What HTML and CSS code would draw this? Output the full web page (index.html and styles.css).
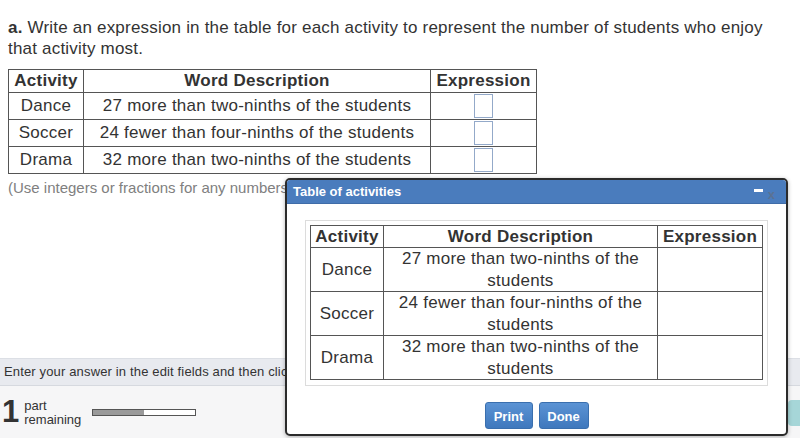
FILE: index.html
```html
<!DOCTYPE html>
<html>
<head>
<meta charset="utf-8">
<link rel="stylesheet" href="styles.css">
</head>
<body>
<div class="page">
  <div class="content">
    <p class="prompt"><b>a.</b> Write an expression in the table for each activity to represent the number of students who enjoy that activity most.</p>
    <table class="main-table">
      <tr class="head"><th class="c1">Activity</th><th class="c2">Word Description</th><th class="c3">Expression</th></tr>
      <tr><td>Dance</td><td>27 more than two-ninths of the students</td><td><span class="field"></span></td></tr>
      <tr><td>Soccer</td><td>24 fewer than four-ninths of the students</td><td><span class="field"></span></td></tr>
      <tr><td>Drama</td><td>32 more than two-ninths of the students</td><td><span class="field"></span></td></tr>
    </table>
    <p class="note">(Use integers or fractions for any numbers in the expressions.)</p>
  </div>
  <div class="spacer"></div>
  <div class="hint-bar">Enter your answer in the edit fields and then click Check Answer.</div>
  <div class="footer">
    <div class="count">1</div>
    <div class="count-label">part<br>remaining</div>
    <div class="progress"><div class="progress-fill"></div></div>
    <div class="check-btn"></div>
  </div>

  <div class="dialog">
    <div class="dialog-title">
      <span class="dialog-name">Table of activities</span>
      <span class="dialog-ctrls"><span class="minus"></span><span class="close">x</span></span>
    </div>
    <div class="dialog-body">
      <div class="frame">
        <table class="pop-table">
          <tr class="head"><th class="p1">Activity</th><th class="p2">Word Description</th><th class="p3">Expression</th></tr>
          <tr><td>Dance</td><td>27 more than two-ninths of the students</td><td></td></tr>
          <tr><td>Soccer</td><td>24 fewer than four-ninths of the students</td><td></td></tr>
          <tr><td>Drama</td><td>32 more than two-ninths of the students</td><td></td></tr>
        </table>
      </div>
      <div class="buttons">
        <span class="btn btn-print">Print</span>
        <span class="btn btn-done">Done</span>
      </div>
    </div>
  </div>
</div>
</body>
</html>
```

FILE: styles.css
```css
html, body {
  margin: 0;
  padding: 0;
  background: #fff;
}
body {
  font-family: "Liberation Sans", Arial, sans-serif;
  color: #333;
  width: 800px;
  height: 438px;
  overflow: hidden;
}
.page {
  position: relative;
  width: 800px;
  height: 438px;
  display: flex;
  flex-direction: column;
}
.content {
  padding: 17px 8px 0 8px;
}
.prompt {
  margin: 0;
  font-size: 17px;
  letter-spacing: 0.2px;
  line-height: 21px;
  width: 784px;
}
.prompt b {
  font-weight: bold;
}
.main-table {
  margin-top: 10px;
  border-collapse: collapse;
  font-size: 17px;
  letter-spacing: 0.25px;
  color: #333;
}
.main-table th, .main-table td {
  border: 1px solid #555;
  padding: 0;
  text-align: center;
  white-space: nowrap;
}
.main-table th {
  height: 22px;
  font-weight: bold;
  line-height: 20px;
}
.main-table td {
  height: 26px;
}
.main-table .c1 { width: 74px; }
.main-table .c2 { width: 346px; }
.main-table .c3 { width: 105px; }
.field {
  display: inline-block;
  width: 17px;
  height: 22px;
  border: 1px solid #93a9c9;
  vertical-align: middle;
  background: #fff;
}
.note {
  margin: 5px 0 0 0;
  font-size: 15px;
  line-height: 18px;
  color: #808080;
  white-space: nowrap;
}
.spacer {
  flex: 1;
}
.hint-bar {
  height: 26px;
  background: #e8eaef;
  border-top: 1px solid #dcdfe5;
  border-bottom: 1px solid #d6d9df;
  font-size: 13px;
  letter-spacing: 0.15px;
  line-height: 26px;
  padding-left: 4px;
  white-space: nowrap;
  overflow: hidden;
  color: #333;
}
.footer {
  height: 52px;
  background: #f6f6f7;
  display: flex;
  align-items: center;
  position: relative;
}
.count {
  font-size: 31px;
  font-weight: bold;
  line-height: 32px;
  margin-left: 2px;
  color: #333;
}
.count-label {
  font-size: 13px;
  line-height: 14px;
  margin-left: 5px;
  margin-top: 2px;
  color: #333;
}
.progress {
  margin-left: 11px;
  width: 102px;
  height: 5px;
  border: 1px solid #555;
  background: #fff;
  margin-top: 1px;
}
.progress-fill {
  width: 51px;
  height: 5px;
  background: #9a9a9a;
}
.check-btn {
  margin-left: auto;
  width: 12px;
  height: 26px;
  background: #a6d6d8;
  border-radius: 4px 0 0 4px;
  margin-top: 1px;
}

/* Dialog overlay */
.dialog {
  position: absolute;
  left: 285px;
  top: 178px;
  width: 499px;
  height: 254px;
  border: 2px solid #2b2b2b;
  border-radius: 5px;
  background: #fff;
  overflow: hidden;
  box-shadow: 0 1px 4px rgba(0,0,0,0.3);
  display: flex;
  flex-direction: column;
}
.dialog-title {
  height: 23px;
  background: #4a7cbd;
  display: flex;
  align-items: center;
  justify-content: space-between;
  padding: 0 11px 0 6px;
  border-bottom: 1px solid #3f6ca8;
}
.dialog-name {
  color: #fff;
  font-weight: bold;
  font-size: 13px;
}
.dialog-ctrls {
  display: flex;
  align-items: center;
}
.minus {
  display: inline-block;
  width: 9px;
  height: 3px;
  background: #fff;
  margin-top: -3px;
}
.close {
  color: #5a7294;
  font-size: 13px;
  font-weight: bold;
  line-height: 13px;
  margin-left: 5px;
  margin-top: 5px;
}
.dialog-body {
  padding: 16px 0 0 18px;
}
.frame {
  width: 453px;
  border: 1px solid #dcdcdc;
  padding: 4px 4px 5px 4px;
}
.pop-table {
  border-collapse: collapse;
  font-size: 17px;
  letter-spacing: 0.25px;
  color: #333;
  width: 453px;
}
.pop-table th, .pop-table td {
  border: 1px solid #555;
  padding: 0;
  text-align: center;
  line-height: 21.5px;
}
.pop-table th {
  height: 21px;
  line-height: 20px;
  font-weight: bold;
}
.pop-table td {
  height: 43px;
}
.pop-table .p1 { width: 72px; }
.pop-table .p2 { width: 274px; }
.pop-table .p3 { width: 104px; }
.buttons {
  display: flex;
  justify-content: center;
  gap: 6px;
  margin-top: 16px;
  margin-left: -18px;
}
.btn {
  display: inline-block;
  height: 27px;
  line-height: 27px;
  border-radius: 3px;
  background: linear-gradient(#5b93d4, #3f78bd);
  border: 1px solid #3a6fae;
  color: #fff;
  font-weight: bold;
  font-size: 13px;
  box-sizing: border-box;
  text-align: center;
}
.btn-print { width: 48px; }
.btn-done { width: 50px; }
```
